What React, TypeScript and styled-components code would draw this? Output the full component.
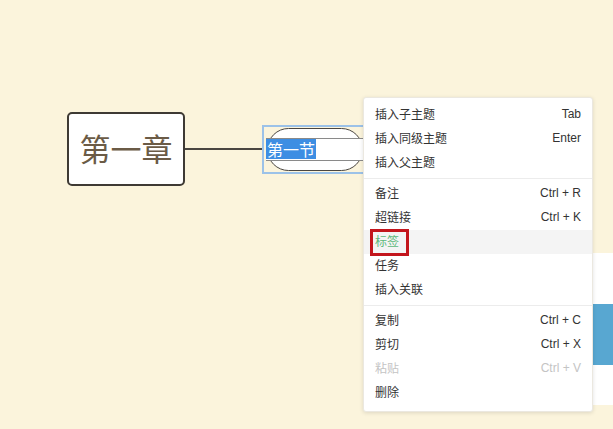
import { createGlobalStyle, styled } from "styled-components";

const Global = createGlobalStyle`
  html, body {
    margin: 0;
    padding: 0;
    background: #fbf4dc;
  }
  body {
    font-family: "Liberation Sans", "Noto Sans CJK SC", sans-serif;
  }
`;

const Canvas = styled.div`
  position: relative;
  width: 613px;
  height: 429px;
  overflow: hidden;
  background: #fbf4dc;
`;

/* mind-map branch: root topic, connector, edited sub topic */
const Branch = styled.div`
  position: absolute;
  left: 67px;
  top: 112px;
  display: flex;
  align-items: center;
`;

const RootNode = styled.div`
  width: 118px;
  height: 74px;
  box-sizing: border-box;
  padding-bottom: 3px;
  border: 2px solid #3e3a34;
  border-radius: 5px;
  background: #ffffff;
  display: flex;
  align-items: center;
  justify-content: center;
  font-family: "Noto Sans CJK SC", sans-serif;
  font-size: 31px;
  color: #6b5b46;
`;

const Connector = styled.div`
  width: 77px;
  height: 2px;
  background: #4a4641;
`;

const Selection = styled.div`
  position: relative;
  width: 110px;
  height: 49px;
  box-sizing: border-box;
  padding: 1px 0 0 3px;
  border: 2px solid #9cc2e8;
`;

const Pill = styled.div`
  width: 96px;
  height: 43px;
  box-sizing: border-box;
  border: 1px solid #4a4641;
  border-radius: 22px;
  background: #ffffff;
`;

const Editor = styled.div`
  position: absolute;
  left: 2px;
  top: 11px;
  width: 110px;
  height: 23px;
  box-sizing: border-box;
  border-top: 1px solid #8a8a8a;
  border-bottom: 1px solid #8a8a8a;
  background: #ffffff;
  display: flex;
  align-items: center;
`;

const SelectedText = styled.span`
  background: #3d8ee3;
  color: #ffffff;
  font-family: "Noto Sans CJK SC", sans-serif;
  font-size: 16px;
  line-height: 20px;
  padding: 0 1px;
`;

const SidePanel = styled.div`
  position: absolute;
  left: 593px;
  top: 253px;
  width: 20px;
  height: 152px;
  background: #ffffff;
  display: flex;
  flex-direction: column;
  padding-top: 51px;
  box-sizing: border-box;
`;

const BlueBlock = styled.div`
  height: 61px;
  background: #58a7d1;
`;

const Menu = styled.div`
  position: absolute;
  left: 363px;
  top: 97px;
  width: 230px;
  box-sizing: border-box;
  padding: 5px 0 6px;
  background: #ffffff;
  border: 1px solid #ebe8e0;
  border-radius: 3px;
  box-shadow: 0 1px 4px rgba(0, 0, 0, 0.12);
`;

const Row = styled.div<{ $active?: boolean; $disabled?: boolean; $accent?: boolean }>`
  position: relative;
  height: 24px;
  box-sizing: border-box;
  padding: 0 11px 3px;
  display: flex;
  align-items: center;
  justify-content: space-between;
  background: ${(p) => (p.$active ? "#f4f4f4" : "transparent")};
  color: ${(p) => (p.$disabled ? "#c4c4c4" : p.$accent ? "#5cb87a" : "#333333")};
  font-size: 12px;
`;

const Label = styled.span`
  font-family: "Noto Sans CJK SC", sans-serif;
  line-height: 14px;
`;

const Keys = styled.span`
  font-family: "Liberation Sans", sans-serif;
  font-size: 12px;
  line-height: 14px;
  color: inherit;
`;

const Divider = styled.div`
  height: 1px;
  margin: 3px 0;
  background: #ececec;
`;

const Marker = styled.div`
  position: absolute;
  left: 6px;
  top: -1px;
  width: 39px;
  height: 27px;
  box-sizing: border-box;
  border: 3px solid #c3151c;
`;

type Item = { label: string; keys?: string; active?: boolean; disabled?: boolean; accent?: boolean };

const groups: Item[][] = [
  [
    { label: "插入子主题", keys: "Tab" },
    { label: "插入同级主题", keys: "Enter" },
    { label: "插入父主题" },
  ],
  [
    { label: "备注", keys: "Ctrl + R" },
    { label: "超链接", keys: "Ctrl + K" },
    { label: "标签", active: true, accent: true },
    { label: "任务" },
    { label: "插入关联" },
  ],
  [
    { label: "复制", keys: "Ctrl + C" },
    { label: "剪切", keys: "Ctrl + X" },
    { label: "粘贴", keys: "Ctrl + V", disabled: true },
    { label: "删除" },
  ],
];

const App = () => {
  return (
    <Canvas>
      <Global />
      <Branch>
        <RootNode>第一章</RootNode>
        <Connector />
        <Selection>
          <Pill />
          <Editor>
            <SelectedText>第一节</SelectedText>
          </Editor>
        </Selection>
      </Branch>
      <SidePanel>
        <BlueBlock />
      </SidePanel>
      <Menu>
        {groups.map((group, gi) => (
          <div key={gi}>
            {gi > 0 && <Divider />}
            {group.map((item) => (
              <Row
                key={item.label}
                $active={item.active}
                $disabled={item.disabled}
                $accent={item.accent}
              >
                <Label>{item.label}</Label>
                {item.keys && <Keys>{item.keys}</Keys>}
                {item.accent && <Marker />}
              </Row>
            ))}
          </div>
        ))}
      </Menu>
    </Canvas>
  );
};

export default App;
